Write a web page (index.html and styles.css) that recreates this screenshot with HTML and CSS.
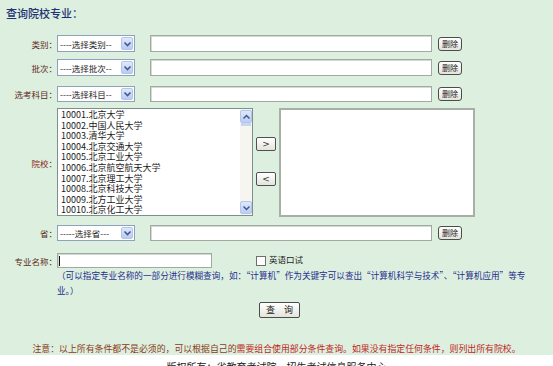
FILE: index.html
```html
<!DOCTYPE html>
<html lang="zh-CN">
<head>
<meta charset="utf-8">
<title>查询院校专业</title>
<link rel="stylesheet" href="styles.css">
</head>
<body>
<div class="page">
  <div class="title">查询院校专业：</div>

  <div class="row r1">
    <span class="label">类别：</span>
    <div class="select"><span class="opt">----选择类别--</span><i class="arrow"><svg width="9" height="8" viewBox="0 0 9 8"><path d="M1.5 2.5 L4.5 5.5 L7.5 2.5" stroke="#3f5a8c" stroke-width="1.6" fill="none"/></svg></i></div>
    <div class="text"></div>
    <button class="del">删除</button>
  </div>

  <div class="row r2">
    <span class="label">批次：</span>
    <div class="select"><span class="opt">----选择批次--</span><i class="arrow"><svg width="9" height="8" viewBox="0 0 9 8"><path d="M1.5 2.5 L4.5 5.5 L7.5 2.5" stroke="#3f5a8c" stroke-width="1.6" fill="none"/></svg></i></div>
    <div class="text"></div>
    <button class="del">删除</button>
  </div>

  <div class="row r3">
    <span class="label">选考科目：</span>
    <div class="select"><span class="opt">----选择科目--</span><i class="arrow"><svg width="9" height="8" viewBox="0 0 9 8"><path d="M1.5 2.5 L4.5 5.5 L7.5 2.5" stroke="#3f5a8c" stroke-width="1.6" fill="none"/></svg></i></div>
    <div class="text"></div>
    <button class="del">删除</button>
  </div>

  <div class="row listrow">
    <span class="label red">院校：</span>
    <div class="list">
      <div class="items">
        <div>10001.北京大学</div>
        <div>10002.中国人民大学</div>
        <div>10003.清华大学</div>
        <div>10004.北京交通大学</div>
        <div>10005.北京工业大学</div>
        <div>10006.北京航空航天大学</div>
        <div>10007.北京理工大学</div>
        <div>10008.北京科技大学</div>
        <div>10009.北方工业大学</div>
        <div>10010.北京化工大学</div>
      </div>
      <div class="scroll">
        <div class="sbtn"><svg width="9" height="8" viewBox="0 0 9 8"><path d="M1.5 5.5 L4.5 2.5 L7.5 5.5" stroke="#3f5a8c" stroke-width="1.5" fill="none"/></svg></div>
        <div class="thumb"></div>
        <div class="track"></div>
        <div class="sbtn"><svg width="9" height="8" viewBox="0 0 9 8"><path d="M1.5 2.5 L4.5 5.5 L7.5 2.5" stroke="#3f5a8c" stroke-width="1.5" fill="none"/></svg></div>
      </div>
    </div>
    <div class="movers">
      <button class="mv">&gt;</button>
      <button class="mv">&lt;</button>
    </div>
    <div class="right"></div>
  </div>

  <div class="row r4">
    <span class="label">省：</span>
    <div class="select"><span class="opt">-----选择省---</span><i class="arrow"><svg width="9" height="8" viewBox="0 0 9 8"><path d="M1.5 2.5 L4.5 5.5 L7.5 2.5" stroke="#3f5a8c" stroke-width="1.6" fill="none"/></svg></i></div>
    <div class="text"></div>
    <button class="del">删除</button>
  </div>

  <div class="row r5">
    <span class="label">专业名称：</span>
    <div class="major"><span class="caret"></span></div>
    <span class="chk"></span>
    <span class="chklabel">英语口试</span>
  </div>

  <div class="note">（可以指定专业名称的一部分进行模糊查询，如：“计算机”作为关键字可以查出“计算机科学与技术”、“计算机应用”等专<br>业。）</div>

  <div class="btnrow"><button class="query">查　询</button></div>

  <div class="warn"><span class="dark">注意：以上所有条件都不是必须的，可以根据自己的</span>需要组合使用部分条件查询。如果没有指定任何条件，则列出所有院校。</div>
</div>
<div class="footer">版权所有：省教育考试院　招生考试信息服务中心</div>
</body>
</html>
```

FILE: styles.css
```css
* { box-sizing: border-box; }

body {
  margin: 0;
  background: #fff;
  font-family: "Noto Sans CJK SC", "Noto Sans", sans-serif;
  font-size: 9px;
  color: #222;
}

.page {
  background: #ddf0df;
  height: 355px;
  overflow: hidden;
}

.title {
  height: 26px;
  line-height: 26px;
  padding-left: 6px;
  font-size: 11px;
  font-weight: 500;
  color: #1d3272;
}

.row {
  display: flex;
  align-items: center;
}

.r1 { margin-top: 9px; height: 17px; }
.r2 { margin-top: 7px; height: 17px; }
.r3 { margin-top: 10px; height: 16px; }
.listrow { margin-top: 6px; height: 109px; align-items: stretch; }
.r4 { margin-top: 8px; height: 16px; }
.r5 { margin-top: 12px; height: 15px; }

.label {
  flex: none;
  width: 57px;
  text-align: right;
  white-space: nowrap;
  color: #5e2a1c;
  font-size: 8.5px;
}

.label.red {
  align-self: center;
  color: #8e2a1a;
}

.select {
  flex: none;
  width: 78px;
  height: 100%;
  border: 1px solid #8fa2bb;
  background: #fff;
  display: flex;
  align-items: center;
  padding-left: 2px;
}

.opt {
  white-space: nowrap;
  font-size: 8.5px;
  color: #222;
}

.arrow {
  margin-left: auto;
  margin-right: 1px;
  width: 12px;
  height: calc(100% - 2px);
  background: linear-gradient(#dfe8fc, #b8cbf3);
  border: 1px solid #b4c5ea;
  border-radius: 2px;
  display: flex;
  align-items: center;
  justify-content: center;
}

.text {
  flex: none;
  width: 282px;
  height: 100%;
  margin-left: 15px;
  background: #fff;
  border: 1px solid #a1aaa1;
  box-shadow: inset 1px 1px 0 #d3d9d3;
}

.del {
  flex: none;
  margin-left: 6px;
  width: 24px;
  height: 14px;
  padding: 0;
  font: 8px/12px "Noto Sans CJK SC", sans-serif;
  color: #222;
  border: 1px solid #4c4c4c;
  border-radius: 3px;
  background: linear-gradient(#ffffff, #e4e4dc);
}

.list {
  flex: none;
  width: 196px;
  height: 108px;
  border: 1px solid #7f8f8f;
  background: #fff;
  display: flex;
}

.items {
  flex: 1;
  padding: 1px 0 0 3px;
  line-height: 10.6px;
  font-size: 9px;
  overflow: hidden;
  white-space: nowrap;
  color: #1a1a1a;
}

.scroll {
  flex: none;
  width: 12px;
  display: flex;
  flex-direction: column;
  background: #f6f5ef;
  padding: 1px 0;
}

.sbtn {
  height: 13px;
  background: linear-gradient(#dfe8fc, #bacdf4);
  border: 1px solid #b4c5ea;
  border-radius: 2px;
  display: flex;
  align-items: center;
  justify-content: center;
}

.thumb {
  height: 3px;
  margin: 0 1px;
  background: #c9d6f3;
}

.track {
  flex: 1;
}

.movers {
  flex: none;
  width: 26px;
  display: flex;
  flex-direction: column;
  align-items: center;
  padding-top: 29px;
  gap: 21px;
}

.mv {
  width: 20px;
  height: 14px;
  padding: 0;
  font: 9px/12px "DejaVu Sans", sans-serif;
  color: #333;
  border: 1px solid #505050;
  border-radius: 2px;
  background: linear-gradient(#ffffff, #e4e4dc);
}

.right {
  flex: none;
  width: 196px;
  height: 109px;
  background: #fff;
  border: 2px solid #a7b0a7;
}

.major {
  flex: none;
  width: 155px;
  height: 100%;
  background: #fff;
  border: 1px solid #a1aaa1;
  box-shadow: inset 1px 1px 0 #d3d9d3;
  display: flex;
  align-items: center;
  padding-left: 1px;
}

.caret {
  width: 1px;
  height: 10px;
  background: #111;
}

.chk {
  flex: none;
  margin-left: 44px;
  width: 10px;
  height: 10px;
  background: #fff;
  border: 1px solid #6f6f6f;
}

.chklabel {
  margin-left: 3px;
  font-size: 8.5px;
  color: #222;
  margin-top: -4px;
}

.note {
  padding-left: 57px;
  line-height: 15px;
  font-size: 8.6px;
  color: #1f2c8e;
  white-space: nowrap;
}

.btnrow {
  margin-top: 4px;
  padding-left: 259px;
  height: 16px;
}

.query {
  width: 41px;
  height: 16px;
  padding: 0;
  font: 9px/14px "Noto Sans CJK SC", sans-serif;
  color: #222;
  border: 1px solid #4c4c4c;
  border-radius: 2px;
  background: linear-gradient(#ffffff, #e4e4dc);
}

.warn {
  margin-top: 24px;
  line-height: 14px;
  text-align: center;
  font-size: 8.9px;
  color: #c0261c;
  white-space: nowrap;
}

.warn .dark {
  color: #8a3a1a;
}

.footer {
  padding-top: 6px;
  text-align: center;
  font-size: 10px;
  line-height: 12px;
  color: #222;
}
```
